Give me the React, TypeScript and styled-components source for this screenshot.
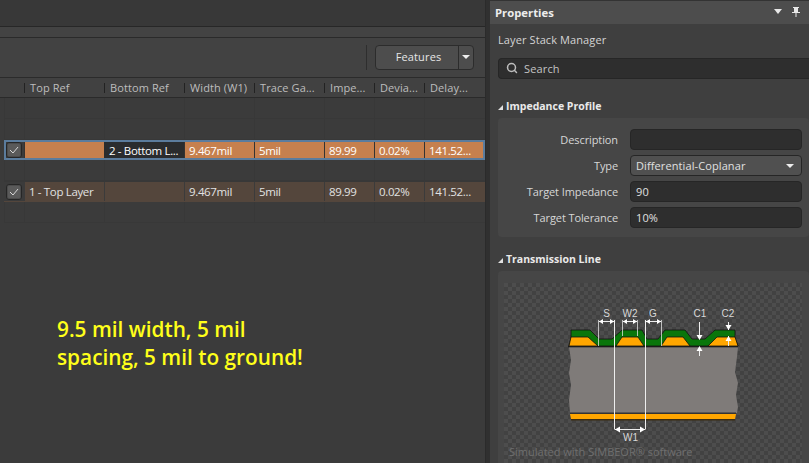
import React from "react";
import styled, { createGlobalStyle } from "styled-components";
import { Search } from "lucide-react";

const Global = createGlobalStyle`
  html, body { margin: 0; padding: 0; background: #3a3a3a; }
  body { width: 809px; height: 463px; overflow: hidden; font-family: "Open Sans", "Noto Sans", sans-serif; font-size: 11px; color: #dcdcdc; }
  * { box-sizing: border-box; }
`;

const Page = styled.div`
  width: 809px;
  height: 463px;
  display: flex;
  overflow: hidden;
  background: #333;
`;

const LeftPane = styled.div`
  width: 486px;
  flex: none;
  display: flex;
  flex-direction: column;
  border-right: 1px solid #2b2b2b;
`;

const TopStrip = styled.div`
  height: 27px;
  flex: none;
  background: #383838;
  border-bottom: 1px solid #272727;
`;

const TabStrip = styled.div`
  height: 11px;
  flex: none;
  background: #434343;
  border-bottom: 1px solid #2a2a2a;
`;

const Toolbar = styled.div`
  height: 40px;
  flex: none;
  background: #424242;
  display: flex;
  align-items: center;
  justify-content: flex-end;
  padding: 0 11px 1px 0;
  border-bottom: 1px solid #2b2b2b;
`;

const ToolSep = styled.div`
  width: 1px;
  height: 25px;
  background: #2e2e2e;
  margin-right: 8px;
`;

const SplitButton = styled.div`
  width: 99px;
  height: 25px;
  display: flex;
  background: #4d4d4d;
  border: 1px solid #2c2c2c;
  border-radius: 4px;
`;

const SplitMain = styled.div`
  flex: 1;
  display: flex;
  align-items: center;
  justify-content: center;
  padding: 0 0 1px 3px;
  color: #e6e6e6;
  font-size: 11px;
  letter-spacing: 0.15px;
  border-right: 1px solid #2c2c2c;
`;

const SplitArrow = styled.div`
  width: 14px;
  display: flex;
  align-items: center;
  justify-content: center;
  &::after {
    content: "";
    border-left: 4px solid transparent;
    border-right: 4px solid transparent;
    border-top: 4px solid #eee;
  }
`;

const Table = styled.div`
  flex: 1;
  background: #3b3b3b;
  padding-left: 4px;
`;

const columns = "20px 80px 80px 70px 70px 50px 50px 61px";

const Header = styled.div`
  display: grid;
  grid-template-columns: ${columns};
  height: 20px;
  margin-left: -4px;
  padding-left: 4px;
  background: #414141;
  border-bottom: 1px solid #2a2a2a;
`;

const HeadCell = styled.div`
  display: flex;
  align-items: center;
  padding-left: 6px;
  color: #bdbdbd;
  font-size: 11px;
  white-space: nowrap;
  overflow: hidden;
  position: relative;
  letter-spacing: 0.1px;
  &::before {
    content: "";
    position: absolute;
    left: 0;
    top: 5px;
    bottom: 4px;
    width: 1px;
    background: #222;
  }
  &:first-child::before { display: none; }
`;

const Row = styled.div<{ $kind?: "sel" | "alt" }>`
  display: grid;
  grid-template-columns: ${columns};
  height: ${(p) => (p.$kind === "sel" ? "20px" : "21px")};
  background: ${(p) => (p.$kind === "sel" ? "#c6804e" : p.$kind === "alt" ? "#54463c" : "#3b3b3b")};
  border-bottom: 1px solid #383838;
  position: relative;
  ${(p) => p.$kind === "alt" && "border-bottom: 0; border-top: 1px solid #383838; padding-bottom: 1px;"}
  ${(p) => p.$kind === "sel" && "outline: 2px solid #5b7c9d; outline-offset: -2px; border-bottom: 0;"}
`;

const Cell = styled.div<{ $sel?: boolean; $dark?: boolean; $plain?: boolean }>`
  display: flex;
  align-items: center;
  padding-left: ${(p) => (p.$dark ? "5px" : "4px")};
  font-size: 11.5px;
  letter-spacing: -0.35px;
  color: ${(p) => (p.$sel || p.$dark ? "#fff" : "#e2e2e2")};
  white-space: nowrap;
  overflow: hidden;
  border-left: 1px solid ${(p) => (p.$sel ? "#333" : p.$plain ? "#383838" : "#3b3b3b")};
  ${(p) => p.$dark && "background: #2a2c2e; margin: 2px 0; border-left: 0;"}
`;

const CheckCell = styled.div`
  display: flex;
  align-items: center;
  justify-content: flex-start;
  padding-left: 2px;
  background: #3b3b3b;
`;

const CheckBox = styled.div`
  width: 16px;
  height: 16px;
  border: 1px solid #262626;
  border-radius: 3px;
  background: #5a5a5a;
  box-shadow: inset 0 0 0 1px #4c4c4c;
  display: flex;
  align-items: center;
  justify-content: center;
`;

const Note = styled.div`
  margin: 92px 0 0 53px;
  color: #ffff1a;
  font-family: "Open Sans", sans-serif;
  font-weight: 600;
  font-size: 20.8px;
  line-height: 28px;
  white-space: nowrap;
`;

const Gutter = styled.div`
  width: 4px;
  flex: none;
  background: #303030;
`;

const Props = styled.div`
  flex: 1;
  background: #3f3f3f;
  display: flex;
  flex-direction: column;
  min-width: 0;
`;

const PropsTitle = styled.div`
  height: 24px;
  flex: none;
  background: #4d4d4d;
  display: flex;
  align-items: center;
  padding: 0 9px 1px 5px;
  color: #ececec;
  font-weight: 700;
  font-size: 11.3px;
  border-top: 1px solid #333;
  justify-content: space-between;
`;

const TitleIcons = styled.div`
  display: flex;
  align-items: center;
  gap: 10px;
`;

const Caption = styled.div`
  padding: 8px 0 0 8px;
  height: 34px;
  color: #d4d4d4;
  font-size: 11px;
  letter-spacing: 0.1px;
`;

const SearchBox = styled.div`
  height: 21px;
  flex: none;
  margin-left: 8px;
  background: #2e2e2e;
  border: 1px solid #262626;
  border-right: 0;
  border-radius: 4px 0 0 4px;
  display: flex;
  align-items: center;
  gap: 6px;
  padding: 0 0 1px 7px;
  color: #c4c4c4;
  font-size: 11px;
  letter-spacing: 0.15px;
`;

const SectionHead = styled.div<{ $top: number }>`
  margin: ${(p) => p.$top}px 0 0 8px;
  height: 16px;
  flex: none;
  display: flex;
  align-items: center;
  gap: 3px;
  color: #eaeaea;
  font-weight: 700;
  font-size: 10.5px;
  &::before {
    content: "";
    width: 0;
    height: 0;
    border-left: 5px solid transparent;
    border-bottom: 5px solid #e0e0e0;
    margin-top: 2px;
  }
`;

const SectionBody = styled.div`
  margin: 4px 0 0 8px;
  padding: 11px 7px 9px 0;
  background: #464646;
  border-radius: 4px;
  display: grid;
  grid-template-columns: 120px 1fr;
  column-gap: 12px;
  row-gap: 5px;
  align-items: center;
  width: 311px;
  flex: none;
`;

const FieldLabel = styled.div`
  text-align: right;
  color: #d6d6d6;
  font-size: 11px;
  letter-spacing: -0.1px;
`;

const FieldValue = styled.div<{ $select?: boolean }>`
  height: 21px;
  background: ${(p) => (p.$select ? "#505050" : "#2e2e2e")};
  border: 1px solid #262626;
  border-radius: 4px;
  display: flex;
  align-items: center;
  justify-content: space-between;
  padding: 0 5px 0 5px;
  color: #e0e0e0;
  font-size: 11px;
  letter-spacing: 0.1px;
`;

const DownArrow = styled.span`
  width: 0;
  height: 0;
  border-left: 4px solid transparent;
  border-right: 4px solid transparent;
  border-top: 4px solid #eee;
  margin-right: 2px;
`;

const LineBody = styled.div`
  margin: 4px 0 0 8px;
  padding: 12px 7px 0 6px;
  background: #464646;
  border-radius: 4px 4px 0 0;
  width: 311px;
  flex: 1;
  overflow: hidden;
`;

const Diagram = styled.svg`
  display: block;
  width: 298px;
  height: 180px;
`;

function Tick() {
  return (
    <svg width="10" height="8" viewBox="0 0 10 8" fill="none">
      <path d="M1 4l3 3 5-6" stroke="#d8d8d8" strokeWidth="1" />
    </svg>
  );
}

const headers = ["", "Top Ref", "Bottom Ref", "Width (W1)", "Trace Ga...", "Impe...", "Devia...", "Delay..."];
const vals = ["9.467mil", "5mil", "89.99", "0.02%", "141.52..."];

function EmptyRow() {
  return (
    <Row>
      {headers.map((_, i) => (
        <Cell key={i} $plain />
      ))}
    </Row>
  );
}

function Arrow({ d }: { d: string }) {
  return <path d={d} fill="#fff" />;
}

function Transmission() {
  return (
    <Diagram viewBox="504 283 298 180">
      <defs>
        <pattern id="chk" x="504" y="283" width="8" height="8" patternUnits="userSpaceOnUse">
          <rect width="8" height="8" fill="#424242" />
          <rect width="4" height="4" fill="#4d4d4d" />
          <rect x="4" y="4" width="4" height="4" fill="#4d4d4d" />
        </pattern>
      </defs>
      <rect x="504" y="283" width="298" height="180" fill="url(#chk)" />
      <path d="M569 347H738L737 357L735 372L738 383L736 395L738 407L737 413H570L569 400L571 385L569 373L571 360Z" fill="#7f7b79" />
      <rect x="570" y="412.5" width="166" height="1.5" fill="#333" />
      <path d="M570 414H736L735 419H571Z" fill="#ffa600" />
      <rect x="571" y="419" width="164" height="1.5" fill="#3a2c12" />
      <path d="M571 338V330H590L599 339H612L622 330H642L647 339H658L665 330H685L692 339H705L715 330H735V338L738 346H569Z" fill="#0a760b" stroke="#111" strokeWidth="0.8" />
      <path d="M569 346L571 337H588L598 346Z M616 346L622 337H638L644 346Z M661 346L667 337H683L690 346Z M708 346L717 337H735L738 346Z" fill="#ffa600" stroke="#111" strokeWidth="0.8" />
      <rect x="568" y="346" width="170" height="1.3" fill="#1a1a1a" />
      <g stroke="#e8e8e8" strokeWidth="1" fill="none" opacity="0.75">
        <path d="M598.5 320V346M622.5 320V336M637.5 320V336M661.5 320V346" />
      </g>
      <g stroke="#eee" strokeWidth="1" fill="none">
        <path d="M614.5 320V429.5M645.5 320V429.5" />
        <path d="M599 321.5H614M623 321.5H637M646 321.5H661M615 429.5H645" />
        <path d="M699.5 322V338M699.5 347V356M728.5 322V330M728.5 336V346" />
      </g>
      <Arrow d="M599 321.5l4-2.5v5ZM614 321.5l-4-2.5v5ZM623 321.5l4-2.5v5ZM637 321.5l-4-2.5v5ZM646 321.5l4-2.5v5ZM661 321.5l-4-2.5v5Z" />
      <Arrow d="M615 429.5l5-3v6ZM645 429.5l-5-3v6Z" />
      <Arrow d="M699.5 340l-3-5h6ZM699.5 346l-3 5h6ZM728.5 330l-3-5h6ZM728.5 336l-3 5h6Z" />
      <g fill="#d8d8d8" fontFamily="Liberation Sans, Arial, sans-serif" fontSize="10" textAnchor="middle">
        <text x="606.5" y="317">S</text>
        <text x="630" y="317">W2</text>
        <text x="653" y="317">G</text>
        <text x="700" y="317">C1</text>
        <text x="728" y="317">C2</text>
        <text x="630.5" y="441">W1</text>
      </g>
      <text x="509" y="456" fill="#6f6f6f" fontFamily="Open Sans, sans-serif" fontSize="11">Simulated with SIMBEOR® software</text>
    </Diagram>
  );
}

export default function App() {
  return (
    <Page>
      <Global />
      <LeftPane>
        <TopStrip />
        <TabStrip />
        <Toolbar>
          <ToolSep />
          <SplitButton>
            <SplitMain>Features</SplitMain>
            <SplitArrow />
          </SplitButton>
        </Toolbar>
        <Table>
          <Header>
            {headers.map((h, i) => (
              <HeadCell key={i}>{h}</HeadCell>
            ))}
          </Header>
          <EmptyRow />
          <EmptyRow />
          <Row $kind="sel">
            <CheckCell><CheckBox><Tick /></CheckBox></CheckCell>
            <Cell $sel />
            <Cell $dark>2 - Bottom L...</Cell>
            {vals.map((v) => (
              <Cell $sel key={v}>{v}</Cell>
            ))}
          </Row>
          <EmptyRow />
          <Row $kind="alt">
            <CheckCell><CheckBox><Tick /></CheckBox></CheckCell>
            <Cell>1 - Top Layer</Cell>
            <Cell />
            {vals.map((v) => (
              <Cell key={v}>{v}</Cell>
            ))}
          </Row>
          <EmptyRow />
          <Note>9.5 mil width, 5 mil<br />spacing, 5 mil to ground!</Note>
        </Table>
      </LeftPane>
      <Gutter />
      <Props>
        <PropsTitle>
          <span>Properties</span>
          <TitleIcons>
            <svg width="8" height="6" viewBox="0 0 8 6"><path d="M0 0h8L4 5Z" fill="#e8e8e8" /></svg>
            <svg width="8" height="10" viewBox="0 0 8 10"><path d="M1 0h6v1H6v4h2v1H4.5v4h-1V6H0V5h2V1H1Z" fill="#e8e8e8" /></svg>
          </TitleIcons>
        </PropsTitle>
        <Caption>Layer Stack Manager</Caption>
        <SearchBox>
          <Search size={12} color="#bdbdbd" strokeWidth={3} />
          Search
        </SearchBox>
        <SectionHead $top={19}>Impedance Profile</SectionHead>
        <SectionBody>
          <FieldLabel>Description</FieldLabel>
          <FieldValue />
          <FieldLabel>Type</FieldLabel>
          <FieldValue $select>Differential-Coplanar<DownArrow /></FieldValue>
          <FieldLabel>Target Impedance</FieldLabel>
          <FieldValue>90</FieldValue>
          <FieldLabel>Target Tolerance</FieldLabel>
          <FieldValue>10%</FieldValue>
        </SectionBody>
        <SectionHead $top={14}>Transmission Line</SectionHead>
        <LineBody>
          <Transmission />
        </LineBody>
      </Props>
    </Page>
  );
}
